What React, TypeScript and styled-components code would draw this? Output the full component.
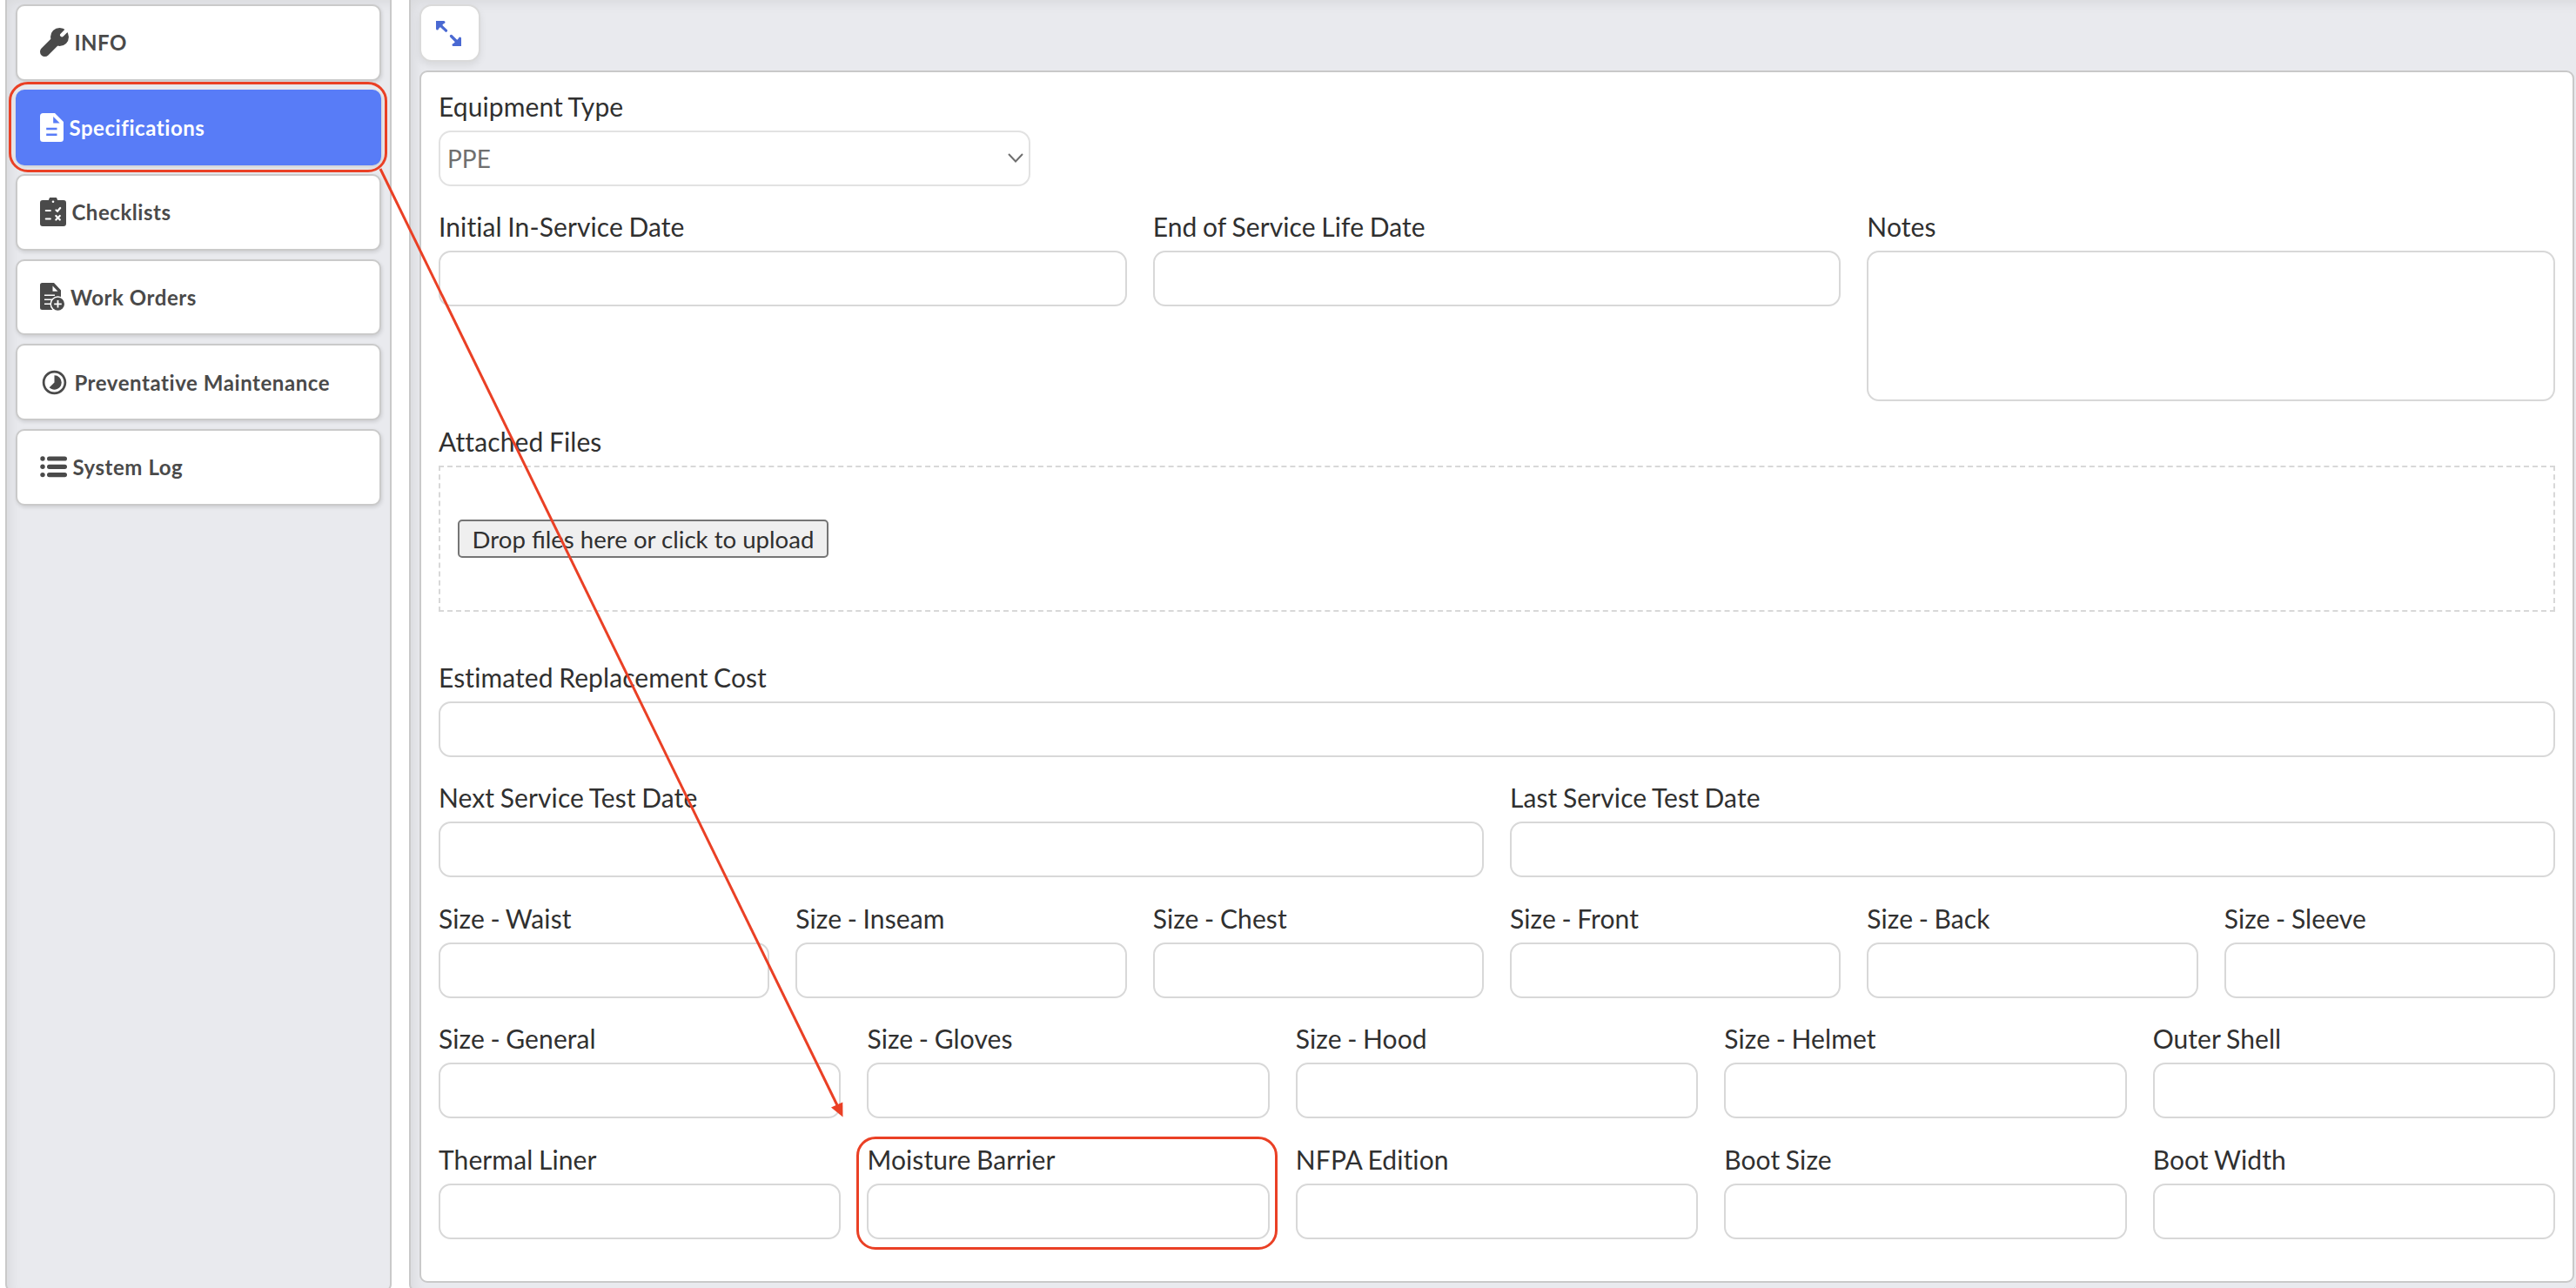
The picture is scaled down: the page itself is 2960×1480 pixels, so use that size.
import { createGlobalStyle, styled } from "styled-components";
import { MdTimelapse } from "react-icons/md";

const GlobalStyle = createGlobalStyle`
  * {
    box-sizing: border-box;
  }

  body {
    margin: 0;
    overflow: hidden;
    background: #fff;
    color: #303030;
    font-family: Lato, "Liberation Sans", sans-serif;
  }
`

const Page = styled.div`
  position: relative;
  display: flex;
  gap: 20px;
  height: 1480px;
  padding-left: 6px;
  overflow: hidden;
`

const Panel = styled.div`
  height: 1484px;
  border: 2px solid #c9c9c9;
  border-top: 0;
  border-radius: 0 0 8px 8px;
  background: #e9eaee;
  box-shadow: inset 8px 8px 14px -4px rgba(0, 0, 0, 0.07);
`

const Sidebar = styled(Panel)`
  display: flex;
  flex-direction: column;
  gap: 10px;
  flex: 0 0 444px;
  padding: 5px 10px;
`

const Main = styled(Panel)`
  flex: 1;
  border-right: 0;
  padding: 5px 2px 0 10px;
`

const NavItem = styled.button<{ $active?: boolean }>`
  display: flex;
  align-items: center;
  flex: 0 0 87.6px;
  padding: 0 0 0 26px;
  border: 2px solid ${(p) => (p.$active ? "#587cf7" : "#cacaca")};
  border-radius: 10px;
  background: ${(p) => (p.$active ? "#587cf7" : "#fff")};
  color: ${(p) => (p.$active ? "#fff" : "#4a4a4a")};
  box-shadow: 1px 2px 4px rgba(0, 0, 0, 0.12);
  font: bold 24px Lato, sans-serif;
  letter-spacing: 0.56px;
`

const NavIcon = styled.span`
  display: flex;
  margin-right: 6.4px;
`

const ExpandButton = styled.button`
  display: flex;
  align-items: center;
  justify-content: center;
  width: 69.5px;
  height: 66px;
  padding: 0 2px 0 0;
  border: 2px solid #dadada;
  border-radius: 14px;
  background: #fff;
  box-shadow: 0 4px 8px rgba(0, 0, 0, 0.08);
`

const Card = styled.form`
  display: flex;
  flex-direction: column;
  height: 1393px;
  margin: 10px 0 0;
  padding: 21px 20px 0;
  border: 2px solid #c9c9c9;
  border-radius: 9px;
  background: #fff;
`

const Row = styled.div<{ $height?: number }>`
  display: flex;
  gap: 30px;
  flex: 0 0 ${(p) => p.$height ?? 138.4}px;
`

const Field = styled.label<{ $width?: number }>`
  position: relative;
  display: flex;
  flex-direction: column;
  flex: ${(p) => (p.$width ? `0 0 ${p.$width}px` : "1 1 0")};
  min-width: 0;
`

const Label = styled.span`
  height: 46px;
  font-size: 30px;
  font-variant-ligatures: none;
  letter-spacing: 0.1px;
  line-height: 36px;
  word-spacing: -1.2px;
`

const Input = styled.input`
  width: 100%;
  height: 64px;
  border: 2px solid #d8d8d8;
  border-radius: 14px;
  background: #fff;
`

const TextArea = styled.textarea`
  height: 173px;
  border: 2px solid #d8d8d8;
  border-radius: 14px;
  resize: none;
`

const SelectBox = styled.div`
  display: flex;
  align-items: center;
  justify-content: space-between;
  height: 64px;
  padding: 0 6px 0 8px;
  border: 2px solid #e2e2e2;
  border-radius: 14px;
  color: #6f6f6f;
  font-size: 28px;
`

const DropZone = styled.div`
  display: flex;
  align-items: center;
  height: 168px;
  padding-left: 20px;
  border: 2px dashed #d8d8d8;
`

const UploadButton = styled.button`
  width: 426px;
  height: 44px;
  padding: 0;
  border: 2px solid #757575;
  border-radius: 5px;
  background: #efefef;
  color: #303030;
  font: 27.6px Lato, sans-serif;
  white-space: nowrap;
`

const Highlight = styled.div`
  position: absolute;
  border: 3px solid #ea4025;
  border-radius: 22px;
  pointer-events: none;
`

const NavHighlight = styled(Highlight)`
  left: 10px;
  top: 94px;
  width: 435px;
  height: 104px;
`

const FieldHighlight = styled(Highlight)`
  left: -12px;
  top: -8px;
  width: 484px;
  height: 130px;
`

const ArrowLayer = styled.svg`
  position: absolute;
  left: 0;
  top: 0;
  pointer-events: none;
`

const WrenchIcon = () => (
    <svg width="33" height="33" viewBox="0 0 33 33">
        <circle cx="22.5" cy="10.5" r="10.5" fill="currentColor"/>
        <path d="M19 14L5.5 27.5" stroke="currentColor" strokeWidth="11" strokeLinecap="round"/>
        <path d="M25.2 8.2L32 1.4" stroke="#fff" strokeWidth="4.4" strokeLinecap="round"/>
    </svg>
)

const FileIcon = () => (
    <svg width="27" height="33" viewBox="0 0 27 33">
        <path fill="currentColor" d="M3.5 0H17l10 10v19.5a3.5 3.5 0 0 1-3.5 3.5h-20A3.5 3.5 0 0 1 0 29.5v-26A3.5 3.5 0 0 1 3.5 0z"/>
        <path fill="#587cf7" d="M15.2 4v7.5h7.5z"/>
        <path stroke="#587cf7" strokeWidth="2.4" d="M7.2 18h12.3M7.2 24.7h12.3"/>
    </svg>
)

const ClipboardIcon = () => (
    <svg width="30" height="33" viewBox="0 0 30 33">
        <path fill="currentColor" d="M3 3h7a5 4.5 0 0 1 10 0h7a3 3 0 0 1 3 3v24a3 3 0 0 1-3 3H3a3 3 0 0 1-3-3V6a3 3 0 0 1 3-3z"/>
        <circle cx="15" cy="4.8" r="1.3" fill="#fff"/>
        <path stroke="#fff" strokeWidth="2.2" strokeLinecap="round" fill="none"
              d="M6.8 15h5M6.8 24.5h5M18.5 14.5l1.5 1.3L23.2 12M18.3 21l4.5 4.5M22.8 21l-4.5 4.5"/>
    </svg>
)

const WorkOrderIcon = () => (
    <svg width="28.5" height="33" viewBox="0 0 28.5 33">
        <path fill="currentColor" d="M2.5 0H16l8 8.5V31H2.5A2.5 2.5 0 0 1 0 28.5v-26A2.5 2.5 0 0 1 2.5 0z"/>
        <path fill="#fff" d="M14.5 3.5v6.3h6z"/>
        <path stroke="#fff" strokeWidth="1.5" d="M5 14.3h12M5 19.3h9M5 24.3h7"/>
        <circle cx="20.5" cy="24.3" r="9" fill="#fff"/>
        <circle cx="20.5" cy="24.3" r="7.5" fill="currentColor"/>
        <path stroke="#fff" strokeWidth="1.8" d="M20.5 20v8.6M16.2 24.3h8.6"/>
    </svg>
)

const ListIcon = () => (
    <svg width="31" height="25" viewBox="0 0 31 25" fill="currentColor">
        {[3, 12.3, 21.6].map((y) => (
            <g key={y}>
                <circle cx="3" cy={y} r="2.7"/>
                <rect x="8" y={y - 2.6} width="23" height="5.2" rx="2.6"/>
            </g>
        ))}
    </svg>
)

const ExpandIcon = () => (
    <svg width="29" height="29" viewBox="0 0 29 29" fill="#4a69d2" stroke="#4a69d2">
        <path stroke="none" d="M0 0h9a1.5 1.5 0 0 1 0 3L3 9a1.5 1.5 0 0 1-3 0zM29 29h-9a1.5 1.5 0 0 1 0-3l6-6a1.5 1.5 0 0 1 3 0z"/>
        <path strokeWidth="3.2" strokeLinecap="round" d="M3 3l8.5 8.2M17.5 17.5L26 26"/>
    </svg>
)

const NAV_ITEMS = [
    { label: "INFO", icon: <WrenchIcon/> },
    { label: "Specifications", icon: <FileIcon/>, active: true },
    { label: "Checklists", icon: <ClipboardIcon/> },
    { label: "Work Orders", icon: <WorkOrderIcon/> },
    { label: "Preventative Maintenance", icon: <MdTimelapse size={33}/> },
    { label: "System Log", icon: <ListIcon/> },
]

const FIELD_ROWS = [
    ["Estimated Replacement Cost"],
    ["Next Service Test Date", "Last Service Test Date"],
    ["Size - Waist", "Size - Inseam", "Size - Chest", "Size - Front", "Size - Back", "Size - Sleeve"],
    ["Size - General", "Size - Gloves", "Size - Hood", "Size - Helmet", "Outer Shell"],
    ["Thermal Liner", "Moisture Barrier", "NFPA Edition", "Boot Size", "Boot Width"],
]

const App = () => (
    <Page>
        <GlobalStyle/>
        <Sidebar>
            {NAV_ITEMS.map((item) => (
                <NavItem key={item.label} $active={item.active}>
                    <NavIcon>{item.icon}</NavIcon>
                    {item.label}
                </NavItem>
            ))}
        </Sidebar>
        <Main>
            <ExpandButton><ExpandIcon/></ExpandButton>
            <Card>
                <Row $height={138}>
                    <Field $width={680}>
                        <Label>Equipment Type</Label>
                        <SelectBox>
                            PPE
                            <svg width="18" height="12" viewBox="0 0 18 12" fill="none" stroke="#6f6f6f" strokeWidth="2">
                                <path d="M1 1l8 8.5L17 1"/>
                            </svg>
                        </SelectBox>
                    </Field>
                </Row>
                <Row $height={247}>
                    <Field>
                        <Label>Initial In-Service Date</Label>
                        <Input/>
                    </Field>
                    <Field>
                        <Label>End of Service Life Date</Label>
                        <Input/>
                    </Field>
                    <Field>
                        <Label>Notes</Label>
                        <TextArea/>
                    </Field>
                </Row>
                <Row $height={271}>
                    <Field as="div">
                        <Label>Attached Files</Label>
                        <DropZone>
                            <UploadButton type="button">Drop files here or click to upload</UploadButton>
                        </DropZone>
                    </Field>
                </Row>
                {FIELD_ROWS.map((labels) => (
                    <Row key={labels[0]}>
                        {labels.map((label) => (
                            <Field key={label}>
                                <Label>{label}</Label>
                                <Input/>
                                {label === "Moisture Barrier" && <FieldHighlight/>}
                            </Field>
                        ))}
                    </Row>
                ))}
            </Card>
        </Main>
        <NavHighlight/>
        <ArrowLayer width="2960" height="1480" viewBox="0 0 2960 1480">
            <path d="M437 194L962 1270" stroke="#ea4025" strokeWidth="3"/>
            <path d="M968.5 1283.5L955 1272.5L968.3 1266.5z" fill="#ea4025"/>
        </ArrowLayer>
    </Page>
)

export default App;
